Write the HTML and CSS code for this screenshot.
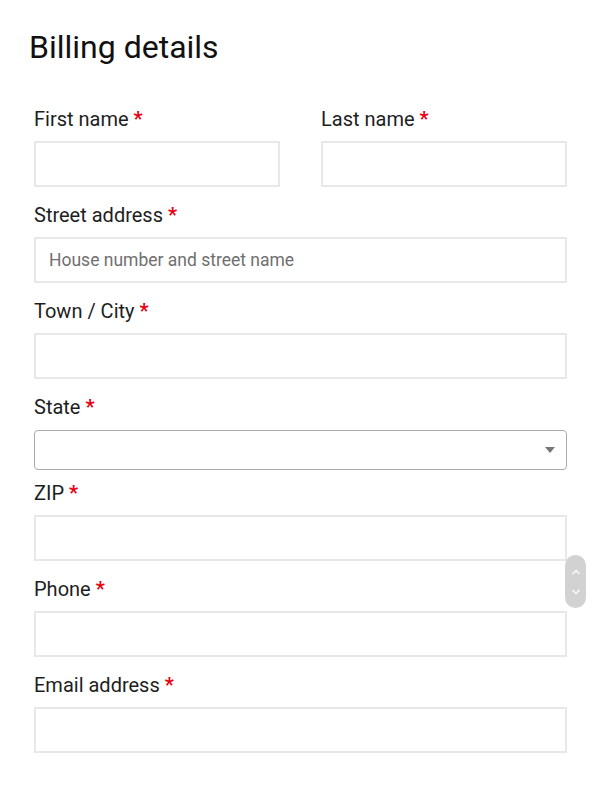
FILE: index.html
```html
<!DOCTYPE html>
<html>
<head>
<meta charset="UTF-8">
<title>Billing details</title>
<link rel="stylesheet" href="styles.css">
</head>
<body>
<div class="billing">
  <h3 class="title">Billing details</h3>

  <div class="pair">
    <div class="field">
      <label for="first_name">First name <abbr class="req">*</abbr></label>
      <input type="text" id="first_name">
    </div>
    <div class="field">
      <label for="last_name">Last name <abbr class="req">*</abbr></label>
      <input type="text" id="last_name">
    </div>
  </div>

  <div class="field">
    <label for="address">Street address <abbr class="req">*</abbr></label>
    <input type="text" id="address" placeholder="House number and street name">
  </div>

  <div class="field">
    <label for="city">Town / City <abbr class="req">*</abbr></label>
    <input type="text" id="city">
  </div>

  <div class="field field-select">
    <label for="state">State <abbr class="req">*</abbr></label>
    <div class="select-wrap">
      <select id="state"><option></option></select>
    </div>
  </div>

  <div class="field">
    <label for="zip">ZIP <abbr class="req">*</abbr></label>
    <input type="text" id="zip">
  </div>

  <div class="field">
    <label for="phone">Phone <abbr class="req">*</abbr></label>
    <input type="tel" id="phone">
  </div>

  <div class="field">
    <label for="email">Email address <abbr class="req">*</abbr></label>
    <input type="email" id="email">
  </div>
</div>

<div class="scroll-pill">
  <svg width="10" height="40" viewBox="0 0 10 40">
    <path d="M1.5 12 L5 8.5 L8.5 12" fill="none" stroke="#fafafa" stroke-width="1.5"/>
    <path d="M1.5 28 L5 31.5 L8.5 28" fill="none" stroke="#fafafa" stroke-width="1.5"/>
  </svg>
</div>
</body>
</html>
```

FILE: styles.css
```css
  body {
    font-family: Roboto, "Liberation Sans", Arial, sans-serif;
    background-color: #fff;
    color: #1e1e1e;
    margin: 0;
    padding: 0;
  }

  .billing {
    padding: 28px 33px 30px 34px;
  }

  .title {
    font-size: 32px;
    line-height: 38px;
    font-weight: 400;
    color: #111;
    margin: 0 0 38px -5px;
  }

  .pair {
    display: grid;
    grid-template-columns: 1fr 1fr;
    column-gap: 41px;
  }

  .field {
    margin-bottom: 13px;
  }

  .field label {
    display: block;
    font-size: 20px;
    line-height: 30px;
    margin-bottom: 7px;
  }

  .req {
    color: #e60012;
    font-weight: 700;
    text-decoration: none;
    border: none;
  }

  .field input {
    display: block;
    box-sizing: border-box;
    width: 100%;
    height: 46px;
    margin: 0;
    padding: 0 13px;
    border: 2px solid #e8e8e8;
    border-radius: 0;
    font-family: inherit;
    font-size: 17.5px;
    color: #222;
    background: #fff;
    outline: none;
  }

  .field input::placeholder {
    color: #6f6f6f;
  }

  .field-select {
    margin-bottom: 8px;
  }

  .field-select label {
    margin-bottom: 8px;
  }

  .select-wrap {
    position: relative;
  }

  .select-wrap select {
    display: block;
    box-sizing: border-box;
    width: 100%;
    height: 40px;
    margin: 0;
    border: 1px solid #aaa;
    border-radius: 4px;
    background: #fff;
    appearance: none;
    -webkit-appearance: none;
    font-family: inherit;
    font-size: 17px;
  }

  .select-wrap::after {
    content: "";
    position: absolute;
    right: 12px;
    top: 17px;
    border-left: 5px solid transparent;
    border-right: 5px solid transparent;
    border-top: 6px solid #777;
  }

  .scroll-pill {
    position: absolute;
    left: 565px;
    top: 555px;
    width: 21px;
    height: 53px;
    border-radius: 11px;
    background-color: #d2d2d2;
    display: flex;
    align-items: center;
    justify-content: center;
  }
```
